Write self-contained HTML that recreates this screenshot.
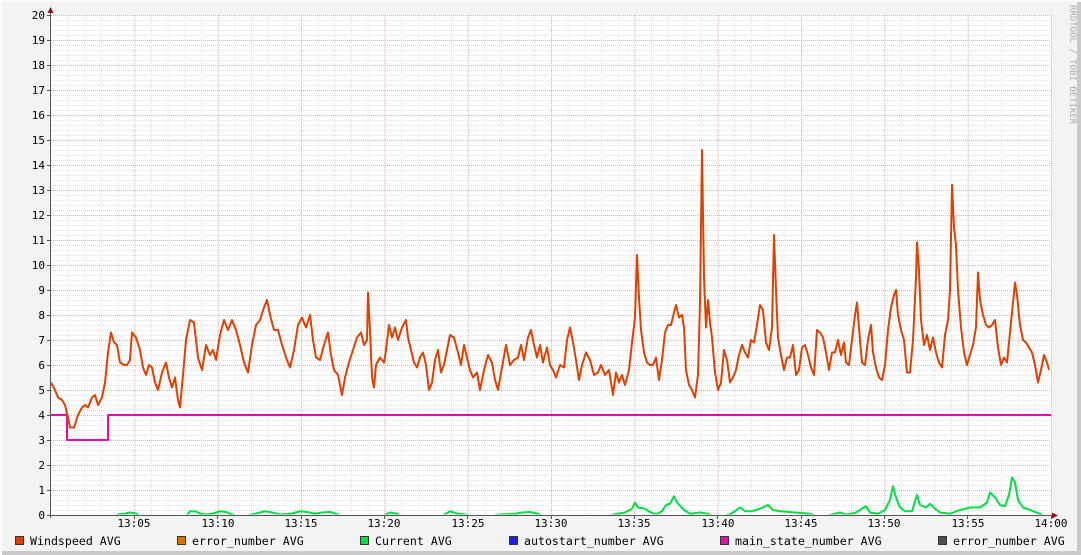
<!DOCTYPE html>
<html><head><meta charset="utf-8"><style>
html,body{margin:0;padding:0;width:1081px;height:555px;overflow:hidden;background:#f3f3f3}
svg{display:block}
text{font-family:"DejaVu Sans Mono","Liberation Mono",monospace;font-size:11px;fill:#000}
.lg{font-size:11.6px}
</style></head><body>
<svg width="1081" height="555" viewBox="0 0 1081 555">
<defs><clipPath id="pc"><rect x="51" y="0" width="1001" height="514.5"/></clipPath></defs>
<rect x="0" y="0" width="1081" height="555" fill="#f3f3f3"/>
<rect x="1077" y="0" width="4" height="555" fill="#c9c9c9"/>
<rect x="0" y="551" width="1081" height="4" fill="#c9c9c9"/>
<rect x="0" y="0" width="1081" height="2" fill="#fbfbfb"/>
<rect x="0" y="0" width="2" height="555" fill="#fbfbfb"/>
<rect x="51" y="15" width="1000" height="500" fill="#fff"/>
<g id="grid">
<path d="M51 20H1051M51 25H1051M51 30H1051M51 35H1051M51 45H1051M51 50H1051M51 55H1051M51 60H1051M51 70H1051M51 75H1051M51 80H1051M51 85H1051M51 95H1051M51 100H1051M51 105H1051M51 110H1051M51 120H1051M51 125H1051M51 130H1051M51 135H1051M51 145H1051M51 150H1051M51 155H1051M51 160H1051M51 170H1051M51 175H1051M51 180H1051M51 185H1051M51 195H1051M51 200H1051M51 205H1051M51 210H1051M51 220H1051M51 225H1051M51 230H1051M51 235H1051M51 245H1051M51 250H1051M51 255H1051M51 260H1051M51 270H1051M51 275H1051M51 280H1051M51 285H1051M51 295H1051M51 300H1051M51 305H1051M51 310H1051M51 320H1051M51 325H1051M51 330H1051M51 335H1051M51 345H1051M51 350H1051M51 355H1051M51 360H1051M51 370H1051M51 375H1051M51 380H1051M51 385H1051M51 395H1051M51 400H1051M51 405H1051M51 410H1051M51 420H1051M51 425H1051M51 430H1051M51 435H1051M51 445H1051M51 450H1051M51 455H1051M51 460H1051M51 470H1051M51 475H1051M51 480H1051M51 485H1051M51 495H1051M51 500H1051M51 505H1051M51 510H1051" stroke="#e2e2e2" stroke-width="1" stroke-dasharray="1,1" transform="translate(0,0.5)"/>
<g stroke="#e0e0e0" stroke-dasharray="1,1" transform="translate(0.5,0)">
<path d="M67.7 15V515M84.3 15V515M101 15V515M117.7 15V515M151 15V515M167.7 15V515M184.3 15V515M201 15V515M234.3 15V515M251 15V515M267.7 15V515M284.3 15V515M317.7 15V515M334.3 15V515M351 15V515M367.7 15V515M401 15V515M417.7 15V515M434.3 15V515M451 15V515M484.3 15V515M501 15V515M517.7 15V515M534.3 15V515M567.7 15V515M584.3 15V515M601 15V515M617.7 15V515M651 15V515M667.7 15V515M684.3 15V515M701 15V515M734.3 15V515M751 15V515M767.7 15V515M784.3 15V515M817.7 15V515M834.3 15V515M851 15V515M867.7 15V515M901 15V515M917.7 15V515M934.3 15V515M951 15V515M984.3 15V515M1001 15V515M1017.7 15V515M1034.3 15V515"/>
</g>
<g stroke="#eeaaaa" stroke-dasharray="1,1">
<path transform="translate(0,0.5)" d="M51 15H1051M51 40H1051M51 65H1051M51 90H1051M51 115H1051M51 140H1051M51 165H1051M51 190H1051M51 215H1051M51 240H1051M51 265H1051M51 290H1051M51 315H1051M51 340H1051M51 365H1051M51 390H1051M51 415H1051M51 440H1051M51 465H1051M51 490H1051"/>
<path transform="translate(0.5,0)" d="M134.3 15V515M217.7 15V515M301 15V515M384.3 15V515M467.7 15V515M551 15V515M634.3 15V515M717.7 15V515M801 15V515M884.3 15V515M967.7 15V515M1051 15V515"/>
</g>
</g>
<g clip-path="url(#pc)">
<g transform="translate(0,515) scale(1,-25)" fill="none" stroke-linejoin="round">
<polyline vector-effect="non-scaling-stroke" stroke="#00e040" stroke-width="2" points="51,-0.1 112,-0.1 118,0.02 125,0.06 130,0.1 136,0.06 142,-0.1 185,-0.1 190,0.15 196,0.14 200,0.06 206,0.02 213,0.06 220,0.15 226,0.12 232,0.03 240,-0.1 255,0.05 265,0.15 272,0.1 280,0.02 292,0.06 300,0.15 307,0.12 315,0.05 322,0.1 330,0.12 336,0.05 345,-0.1 380,-0.1 390,0.1 397,0.05 405,-0.1 440,-0.1 450,0.15 457,0.06 465,0.02 480,-0.1 500,0.02 515,0.05 522,0.1 530,0.12 538,0.05 545,-0.1 600,-0.1 615,0.03 625,0.1 632,0.25 635,0.5 638,0.3 645,0.25 650,0.12 656,0.02 662,0.15 666,0.4 670,0.45 674,0.75 677,0.5 684,0.2 690,0.05 700,0.1 708,0.05 716,-0.1 730,0.03 735,0.15 740,0.3 745,0.15 752,0.15 760,0.25 768,0.4 773,0.2 780,0.15 795,0.1 810,0.05 820,-0.1 835,0.05 840,0.1 846,0.02 855,0.08 866,0.35 870,0.1 878,0.05 885,0.2 890,0.6 893,1.15 896,0.7 900,0.3 905,0.15 912,0.15 917,0.8 920,0.4 926,0.3 930,0.45 935,0.25 940,0.1 950,0.05 960,0.2 970,0.3 980,0.3 987,0.5 990,0.9 995,0.7 1000,0.4 1005,0.35 1009,0.8 1012,1.5 1015,1.3 1018,0.6 1023,0.3 1030,0.2 1040,0.05 1048,-0.1"/>
</g>
</g>
<g transform="translate(0,515) scale(1,-25)" fill="none" stroke-linejoin="round">
<polyline vector-effect="non-scaling-stroke" stroke="#e010a0" stroke-width="2" points="51,4 67,4 67,3 108,3 108,4 1051,4"/>
<polyline vector-effect="non-scaling-stroke" stroke="#e04000" stroke-width="2" points="51,5.3 55,5.0 58,4.7 62,4.6 65,4.4 68,3.9 70,3.5 74,3.5 78,4.0 82,4.3 85,4.4 88,4.3 92,4.7 95,4.8 98,4.4 102,4.7 105,5.3 108,6.5 111,7.3 114,6.9 117,6.8 120,6.1 124,6.0 127,6.0 130,6.2 132,7.3 136,7.1 140,6.6 143,5.9 146,5.6 149,6.0 152,5.9 155,5.3 158,5.0 162,5.7 166,6.1 169,5.5 172,5.1 175,5.5 178,4.6 180,4.3 183,5.6 186,7.0 190,7.8 194,7.7 198,6.3 202,5.8 206,6.8 210,6.4 213,6.6 216,6.2 220,7.2 224,7.8 228,7.4 232,7.8 236,7.4 240,6.8 244,6.1 248,5.7 252,6.8 256,7.6 260,7.8 264,8.3 267,8.6 270,8.0 274,7.4 278,7.4 282,6.8 286,6.3 290,5.9 294,6.6 298,7.6 302,7.9 306,7.5 310,8.0 313,7.0 316,6.3 320,6.2 324,6.8 328,7.3 331,6.4 334,5.8 338,5.6 342,4.8 345,5.5 349,6.1 353,6.6 357,7.1 361,7.3 364,6.8 367,7.0 368,8.9 370,7.4 372,5.5 374,5.1 376,6.0 380,6.3 384,6.1 386,6.6 389,7.6 392,7.1 395,7.5 398,7.0 402,7.5 406,7.8 408,7.1 411,6.6 414,6.1 417,5.9 420,6.3 423,6.5 426,6.0 429,5.0 432,5.3 435,6.2 438,6.6 441,5.7 444,6.0 447,6.6 450,7.2 454,7.1 458,6.5 461,6.0 464,6.8 467,6.3 470,5.8 473,5.5 477,5.7 480,5.0 484,5.8 488,6.4 492,6.1 495,5.4 498,5.0 502,5.9 506,6.8 510,6.0 514,6.2 518,6.3 521,6.8 524,6.2 528,7.1 531,7.4 534,6.8 537,6.3 540,6.8 543,6.1 547,6.7 550,6.0 553,5.8 556,5.5 560,6.0 564,5.9 567,7.0 570,7.5 573,6.9 576,6.2 579,5.4 582,6.0 586,6.5 590,6.2 594,5.6 598,5.7 601,6.0 605,5.6 609,5.8 613,4.8 616,5.7 619,5.3 622,5.6 625,5.2 629,5.8 632,6.9 635,7.9 637,10.4 639,8.7 641,7.4 644,6.5 647,6.1 650,6.0 653,6.0 656,6.3 659,5.4 662,6.2 665,7.3 668,7.6 671,7.6 674,8.1 676,8.4 679,7.9 682,8.0 684,7.5 686,5.8 689,5.2 692,5.0 695,4.7 698,5.6 700,8.5 702,14.6 704,9.5 706,7.5 708,8.6 710,7.7 712,7.1 715,5.7 718,5.0 721,5.3 724,6.6 727,6.2 730,5.3 733,5.5 736,5.8 739,6.4 742,6.8 745,6.5 748,6.3 751,7.0 754,6.9 757,7.6 760,8.4 763,8.2 766,6.9 769,6.6 772,7.5 774,11.2 776,9.0 778,7.1 781,6.4 784,5.8 787,6.3 790,6.3 793,6.8 796,5.6 799,5.8 802,6.7 805,6.8 808,6.4 811,5.9 814,5.6 817,7.4 820,7.3 823,7.1 826,6.5 829,5.8 832,6.5 835,6.5 838,7.0 841,6.4 844,6.9 846,6.1 849,6.0 852,7.0 855,8.0 857,8.5 860,7.0 862,6.1 865,6.0 868,7.0 871,7.6 873,6.5 876,5.9 879,5.5 882,5.4 885,6.0 888,7.4 891,8.3 894,8.8 896,9.0 898,8.0 901,7.4 904,7.0 907,5.7 910,5.7 913,7.0 916,9.5 917,10.9 919,9.8 921,7.8 924,6.8 927,7.2 930,6.6 933,7.1 936,6.5 939,6.1 942,5.9 945,7.2 948,7.8 950,9.0 952,13.2 954,11.5 956,10.8 958,9.0 961,7.5 964,6.5 967,6.0 970,6.4 973,6.8 976,7.5 978,9.7 980,8.6 983,8.0 986,7.6 989,7.5 992,7.6 995,7.8 998,6.7 1001,6.0 1004,6.3 1007,6.1 1010,7.3 1013,8.5 1015,9.3 1017,8.8 1020,7.6 1023,7.0 1026,6.9 1029,6.7 1032,6.5 1035,6.0 1038,5.3 1041,5.8 1044,6.4 1047,6.1 1049,5.8"/>
</g>
<line x1="50.5" y1="12" x2="50.5" y2="518" stroke="#555"/>
<line x1="47" y1="515.5" x2="1054" y2="515.5" stroke="#555"/>
<polygon points="47.5,13 53.5,13 50.5,7" fill="#901010"/>
<polygon points="1052,512.5 1052,518.5 1058,515.5" fill="#901010"/>
<g stroke="#555">
<path d="M47 15.5H51M47 40.5H51M47 65.5H51M47 90.5H51M47 115.5H51M47 140.5H51M47 165.5H51M47 190.5H51M47 215.5H51M47 240.5H51M47 265.5H51M47 290.5H51M47 315.5H51M47 340.5H51M47 365.5H51M47 390.5H51M47 415.5H51M47 440.5H51M47 465.5H51M47 490.5H51"/>
<path d="M134.5 515V519M217.5 515V519M301.5 515V519M384.5 515V519M467.5 515V519M551.5 515V519M634.5 515V519M717.5 515V519M801.5 515V519M884.5 515V519M967.5 515V519M1051.5 515V519"/>
</g>
<g text-anchor="end" class="lg">
<text x="45" y="19">20</text><text x="45" y="44">19</text><text x="45" y="69">18</text><text x="45" y="94">17</text><text x="45" y="119">16</text><text x="45" y="144">15</text><text x="45" y="169">14</text><text x="45" y="194">13</text><text x="45" y="219">12</text><text x="45" y="244">11</text><text x="45" y="269">10</text><text x="45" y="294">9</text><text x="45" y="319">8</text><text x="45" y="344">7</text><text x="45" y="369">6</text><text x="45" y="394">5</text><text x="45" y="419">4</text><text x="45" y="444">3</text><text x="45" y="469">2</text><text x="45" y="494">1</text><text x="45" y="519">0</text>
</g>
<g text-anchor="middle">
<text x="134" y="527">13:05</text><text x="218" y="527">13:10</text><text x="301" y="527">13:15</text><text x="384" y="527">13:20</text><text x="468" y="527">13:25</text><text x="551" y="527">13:30</text><text x="634" y="527">13:35</text><text x="718" y="527">13:40</text><text x="801" y="527">13:45</text><text x="884" y="527">13:50</text><text x="968" y="527">13:55</text><text x="1051" y="527">14:00</text>
</g>
<g stroke="#333" stroke-width="1">
<rect x="15.5" y="536.5" width="8" height="8" fill="#e04000"/>
<rect x="177.5" y="536.5" width="8" height="8" fill="#e07000"/>
<rect x="360.5" y="536.5" width="8" height="8" fill="#00e040"/>
<rect x="509.5" y="536.5" width="8" height="8" fill="#2020e0"/>
<rect x="720.5" y="536.5" width="8" height="8" fill="#e010a0"/>
<rect x="938.5" y="536.5" width="8" height="8" fill="#505050"/>
</g>
<g class="lg">
<text x="30" y="545" class="lg">Windspeed AVG</text>
<text x="192" y="545" class="lg">error_number AVG</text>
<text x="375" y="545" class="lg">Current AVG</text>
<text x="524" y="545" class="lg">autostart_number AVG</text>
<text x="735" y="545" class="lg">main_state_number AVG</text>
<text x="953" y="545" class="lg">error_number AVG</text>
</g>
<text transform="translate(1070,5) rotate(90)" style="font-size:9px;fill:#aaa">RRDTOOL / TOBI OETIKER</text>
</svg>
</body></html>
